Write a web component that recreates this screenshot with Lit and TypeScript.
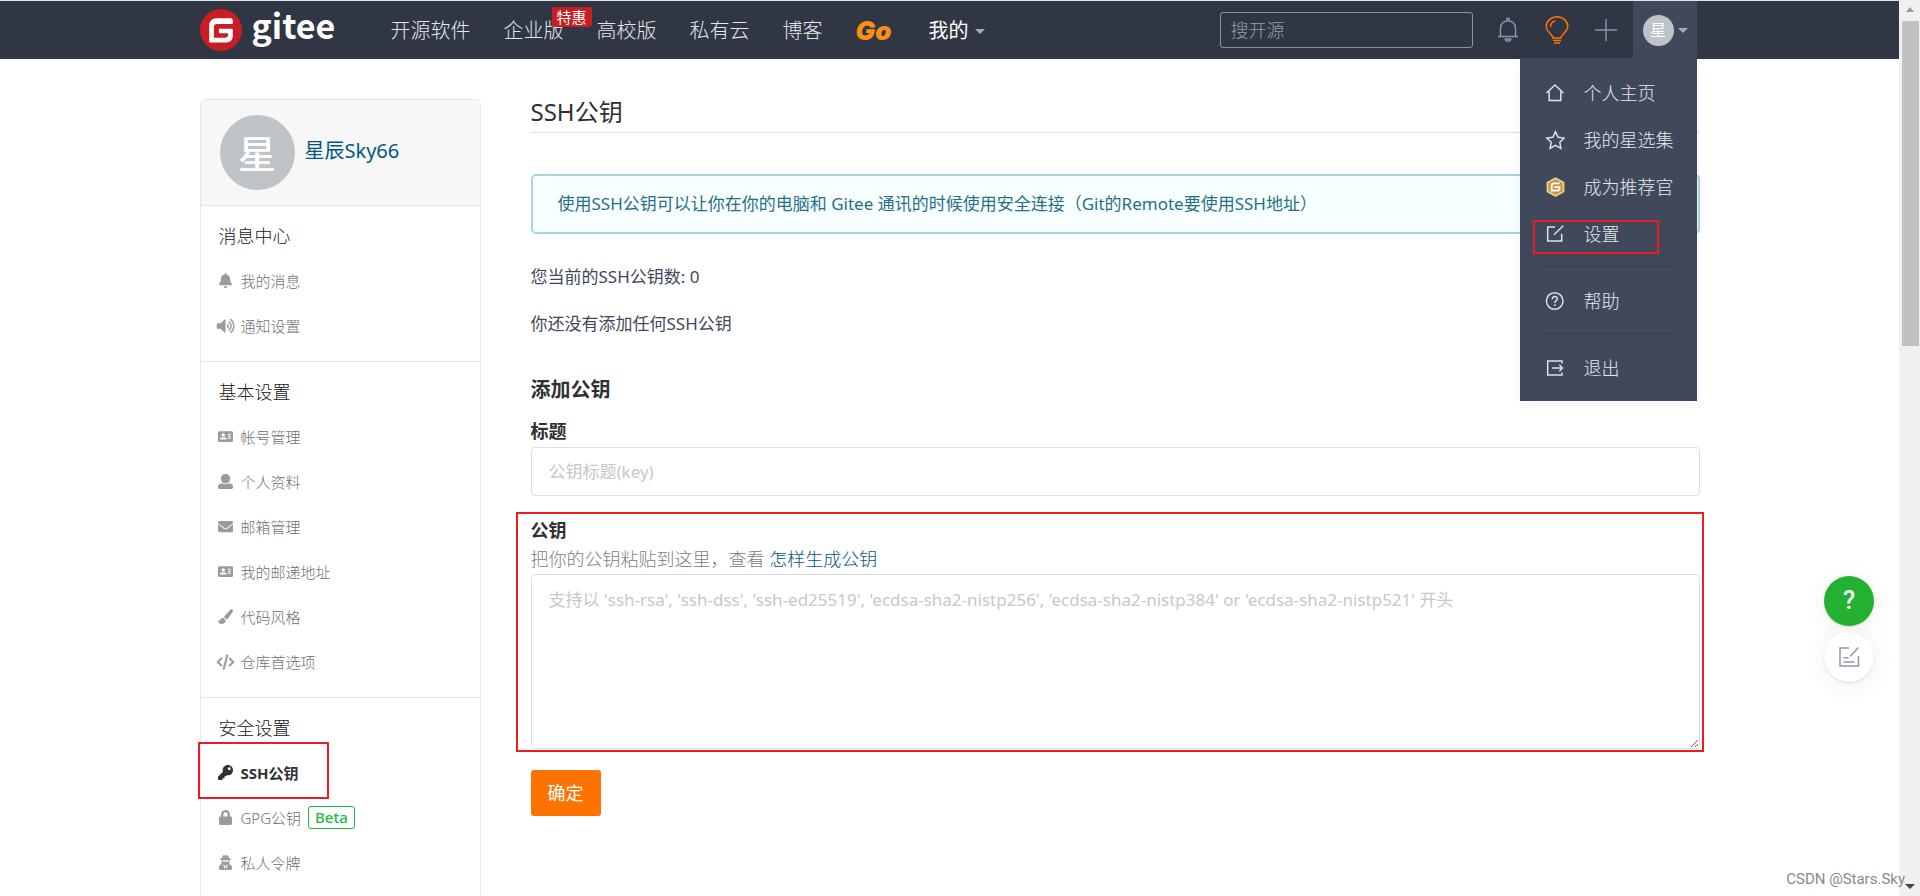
import { LitElement, html, css, svg, nothing } from "lit";
import { customElement, state } from "lit/decorators.js";

const icons: Record<string, any> = {
  bell: svg`<svg class="ico" viewBox="-32 0 512 512"><path d="M224 512c35.32 0 63.97-28.65 63.97-64H160.03c0 35.35 28.65 64 63.97 64zm215.39-149.71c-19.32-20.76-55.47-51.99-55.47-154.29 0-77.7-54.48-139.9-127.94-155.16V32c0-17.67-14.32-32-31.98-32s-31.98 14.33-31.98 32v20.84C118.56 68.1 64.08 130.3 64.08 208c0 102.3-36.15 133.53-55.47 154.29-6 6.45-8.66 14.16-8.61 21.71.11 16.4 12.98 32 32.1 32h383.8c19.12 0 32-15.6 32.1-32 .05-7.55-2.61-15.27-8.61-21.71z"/></svg>`,
  volume: svg`<svg class="ico wide" viewBox="0 0 18 16"><path d="M1 5.2h3L8 1.6c.4-.4 1-.1 1 .4v12c0 .6-.6.8-1 .4L4 10.800H1c-.5 0-.8-.3-.8-.8V6c0-.5.3-.8.8-.8z"/><path class="line" stroke-width="1.500" d="M10.700 6.100c1.300.8 1.300 3 0 3.800M12.200 3.600c3.200 2 3.200 6.800 0 8.800M13.700 1.200c4.700 3.200 4.700 10.400 0 13.600"/></svg>`,
  card: svg`<svg class="ico" viewBox="0 0 16 16"><path fill-rule="evenodd" d="M1.500 2.500h13c.8 0 1.500.6 1.500 1.400v8.600c0 .8-.7 1.400-1.500 1.400h-13c-.8 0-1.500-.6-1.500-1.400V3.900c0-.8.7-1.400 1.500-1.400zM5.600 4.500a1.900 1.900 0 1 0 0 3.800 1.900 1.900 0 0 0 0-3.800zM4.200 8.700C2.900 8.800 2.200 9.500 2.200 10.400v.8h6.800v-.8c0-.9-.7-1.600-2-1.700-.8.500-2 .5-2.800 0zM10.300 5v1.100h3.600V5zm0 2.100v1.100h3.600V7.100zm0 2.100v1.100h3.600V9.200z"/></svg>`,
  user: svg`<svg class="ico" viewBox="0 0 512 512"><path d="M256 0c88.366 0 160 71.634 160 160s-71.634 160-160 160S96 248.366 96 160 167.634 0 256 0zm183.283 333.821l-71.313-17.828c-74.923 53.89-165.738 41.864-223.94 0l-71.313 17.828C29.981 344.505 0 382.903 0 426.955V464c0 26.510 21.490 48 48 48h416c26.510 0 48-21.490 48-48v-37.045c0-44.052-29.981-82.450-72.717-93.134z"/></svg>`,
  mail: svg`<svg class="ico" viewBox="0 0 512 512"><path d="M502.300 190.800c3.900-3.100 9.700-.2 9.700 4.700V400c0 26.500-21.500 48-48 48H48c-26.500 0-48-21.500-48-48V195.600c0-5 5.700-7.800 9.700-4.700 22.400 17.400 52.100 39.500 154.100 113.600 21.100 15.400 56.700 47.800 92.200 47.600 35.700.3 72-32.800 92.300-47.600 102-74.100 131.600-96.300 154-113.700zM256 320c23.200.4 56.600-29.200 73.400-41.400 132.700-96.300 142.800-104.700 173.400-128.700 5.800-4.500 9.200-11.500 9.200-18.900v-19c0-26.500-21.500-48-48-48H48c-26.500 0-48 21.500-48 48v19c0 7.400 3.400 14.300 9.200 18.900 30.600 23.900 40.700 32.400 173.400 128.700 16.800 12.200 50.200 41.800 73.400 41.400z"/></svg>`,
  brush: svg`<svg class="ico" viewBox="0 0 16 16"><path d="M14.300.1c1 0 1.800.9 1.600 1.900-.1.500-.3.900-.6 1.400l-4.200 6.300c-.5.700-1.200 1.200-2 1.400L6.500 8.700c.1-.8.500-1.500 1.200-2.100l5.500-5.900c.3-.4.700-.6 1.100-.6zM5.400 9.400l2.700 2.400c.1 2.500-1.500 4.200-4.200 4.200-2.700 0-3.800-2.100-3.900-4.600.3.2 1.300 1 1.700.9.300 0 .5-.2.600-.4.500-1.600 1.500-2.400 3.100-2.500z"/></svg>`,
  code: svg`<svg class="ico wide" viewBox="0 0 18 16"><path class="line" stroke-width="2" stroke-linejoin="round" stroke-linecap="round" d="M4.800 4.500 1.200 8l3.600 3.500M13.200 4.500 16.800 8l-3.600 3.500M10.700 1.200 7.300 14.800"/></svg>`,
  key: svg`<svg class="ico" viewBox="0 0 512 512"><path d="M512 176.001C512 273.203 433.202 352 336 352c-11.220 0-22.190-1.062-32.827-3.069l-24.012 27.014A23.999 23.999 0 0 1 261.223 384H224v40c0 13.255-10.745 24-24 24h-40v40c0 13.255-10.745 24-24 24H24c-13.255 0-24-10.745-24-24v-78.059c0-6.365 2.529-12.470 7.029-16.971l161.802-161.802C163.108 213.814 160 195.271 160 176 160 78.798 238.797.001 335.999 0 433.488-.001 512 78.511 512 176.001zM336 128c0 26.510 21.490 48 48 48s48-21.490 48-48-21.490-48-48-48-48 21.490-48 48z"/></svg>`,
  lock: svg`<svg class="ico" viewBox="-32 0 512 512"><path d="M400 224h-24v-72C376 68.200 307.800 0 224 0S72 68.200 72 152v72H48c-26.500 0-48 21.500-48 48v192c0 26.500 21.500 48 48 48h352c26.500 0 48-21.500 48-48V272c0-26.500-21.500-48-48-48zm-104 0H152v-72c0-39.700 32.300-72 72-72s72 32.300 72 72v72z"/></svg>`,
  secret: svg`<svg class="ico" viewBox="0 0 16 16"><path fill-rule="evenodd" d="M5.800.2C6.500-.2 7.200.7 8 .7s1.500-.9 2.200-.5c.8.500 1.200 2 1.500 3.100 1.300.3 2.200.6 2.200 1.100s-.9.800-2 1v1c0 .4-.1.700-.2 1l.8.200-.9 2.100c1.900.5 3.400 1.700 3.400 3.800v1c0 .8-.7 1.500-1.500 1.500h-11C1.700 16 1 15.300 1 14.500v-1c0-2 1.200-3.300 3.100-3.800L3.400 7.500l.9-.1c-.1-.3-.2-.6-.2-1v-1c-1.100-.2-2-.5-2-1s.9-.8 2.200-1.100C4.600 2.200 5 .7 5.800.2zM5.100 5.700v.7c.3.900.8 1 1.700 1 .7 0 .8-.8 1.200-.8s.5.8 1.200.8c.9 0 1.400-.1 1.700-1v-.7c-1.800.2-4 .2-5.800 0zM5.500 10.200l1.700 5 .5-3.100-.8-1.400zm5 0-1.400.5-.8 1.400.5 3.100z"/></svg>`,
  home: svg`<svg class="mico" viewBox="0 0 20 20"><path d="M1.500 10 10 2l8.500 8M4.200 8.500v9h11.600v-9"/></svg>`,
  star: svg`<svg class="mico" viewBox="0 0 20 20"><path d="m10.500 1.800 2.700 5.500 6 .8-4.400 4.200 1.100 6-5.400-2.900-5.400 2.900 1.100-6L1.800 8.100l6-.8z"/></svg>`,
  badge: svg`<svg class="mico solid" viewBox="0 0 20 20"><path fill="#f0d08a" d="M10.500.2 19.400 5v10l-8.900 5-8.900-5V5z"/><path fill="#cc9448" d="m10.500 2.200 7.200 3.900v7.800l-7.200 4-7.200-4V6.100z"/><path fill="none" stroke="#fff" stroke-width="1.800" d="M14.800 6.300H9.200c-1.600 0-2.500.9-2.500 2.400v4.900h5.800c1.200 0 2-.8 2-2v-1.400H9.400"/></svg>`,
  edit: svg`<svg class="mico" viewBox="0 0 20 20"><path d="M10 3H2.700v14h14V9.800M9 10.800 18.300 1.800"/></svg>`,
  help: svg`<svg class="mico" viewBox="0 0 20 20"><circle cx="9.700" cy="10" r="8.300"/><path d="M7.300 8.200c0-3.400 5-3.400 5-.4 0 1.900-2.500 1.900-2.500 4.100M9.800 13.300v1.600"/></svg>`,
  exit: svg`<svg class="mico" viewBox="0 0 20 20"><path d="M17 5.500V3H2.700v14H17v-2.500M7 10h10.500M14.300 6.800l3.200 3.200-3.200 3.200"/></svg>`,
};

interface Item { label: string; icon: string; active?: boolean; tag?: string; }
interface Section { title: string; items: Item[]; }

@customElement("app-root")
export class AppRoot extends LitElement {
  @state() private sections: Section[] = [
    { title: "消息中心", items: [
      { label: "我的消息", icon: "bell" },
      { label: "通知设置", icon: "volume" },
    ] },
    { title: "基本设置", items: [
      { label: "帐号管理", icon: "card" },
      { label: "个人资料", icon: "user" },
      { label: "邮箱管理", icon: "mail" },
      { label: "我的邮递地址", icon: "card" },
      { label: "代码风格", icon: "brush" },
      { label: "仓库首选项", icon: "code" },
    ] },
    { title: "安全设置", items: [
      { label: "SSH公钥", icon: "key", active: true },
      { label: "GPG公钥", icon: "lock", tag: "Beta" },
      { label: "私人令牌", icon: "secret" },
    ] },
  ];

  static styles = css`
    :host {
      display: grid;
      grid-template-columns: minmax(0, 1fr) 21px;
      position: relative;
      height: 100vh;
      overflow: hidden;
      background: #fff;
      color: #40485b;
      font-family: "Noto Sans", "Noto Sans CJK SC", sans-serif;
      font-size: 17px;
      font-weight: 400;
      line-height: 24px;
    }
    *, *::before, *::after { box-sizing: border-box; }
    a { color: inherit; text-decoration: none; }
    h1, h2, h3, p, ul { margin: 0; padding: 0; list-style: none; }
    button, input, textarea { font: inherit; }
    svg { display: block; flex: none; }

    .page { min-width: 0; height: 100vh; overflow: hidden; }
    .wrap { width: 100%; max-width: 1500px; margin: 0 auto; }

    .top { background: #303643; border-top: 1px solid #dfe7ea; height: 59px; }
    .bar { display: flex; align-items: center; height: 58px; position: relative; }
    .brand { display: flex; align-items: center; gap: 10px; width: 191px; color: #fff; }
    .word { font: 700 34px/48px "Noto Sans CJK SC", sans-serif; padding-bottom: 10px; }
    .nav { display: flex; align-items: center; gap: 33px; padding-top: 2px; font-size: 20px; font-weight: 300; color: #e4e6e9; }
    .nav a { position: relative; line-height: 28px; white-space: nowrap; }
    .nav .mine { display: flex; align-items: center; gap: 6px; color: #fff; font-weight: 400; }
    .nav .go { width: 40px; font: italic 900 26px/28px Inter, sans-serif; color: #ff8f0c; }
    .promo { position: absolute; left: 48px; top: -10px; padding: 0 5px; border-radius: 2px; background: #c71d23; color: #fff; font-size: 15px; font-weight: 400; line-height: 20px; }
    .caret { border: 5px solid transparent; border-top-color: #a9adb7; border-bottom: 0; }
    .tools { display: flex; align-items: center; margin-left: auto; height: 100%; padding-right: 3px; }
    .search { width: 253px; height: 36px; padding: 0 10px; border: 1px solid #8c92a4; border-radius: 3px; background: transparent; color: #fff; font-size: 18px; font-weight: 300; margin-right: 11px; }
    .search::placeholder { color: #9a9da4; opacity: 1; }
    .tool { display: grid; place-items: center; width: 49px; height: 40px; padding: 0; border: 0; background: none; }
    .me { display: flex; align-items: center; gap: 4px; width: 64px; height: 100%; margin-left: 2px; padding: 0 0 0 10px; border: 0; background: #40485b; }
    .face { display: grid; place-items: center; border-radius: 50%; background: #bdc3c7; color: #fff; font-weight: 400; }
    .face.small { width: 31px; height: 31px; font-size: 16px; line-height: 20px; }
    .face.big { width: 75px; height: 75px; font-size: 38px; line-height: 44px; font-weight: 500; }

    .menu { position: absolute; z-index: 5; right: 3px; top: 57px; width: 177px; padding: 11px 0 10px; background: #40485b; color: #e6e8eb; font-size: 18px; font-weight: 300; box-shadow: 0 4px 12px rgba(0, 40, 60, .05); }
    .menu a { position: relative; display: flex; align-items: center; gap: 19px; height: 47px; padding-left: 25px; white-space: nowrap; }
    .menu hr { height: 1px; margin: 9px 22px 10px 23px; border: 0; background: #373e4f; }
    .mico { width: 20px; height: 20px; fill: none; stroke: #dfe1e5; stroke-width: 1.5; }
    .mico.solid { stroke: none; }
    .menu .marked::after { content: ""; position: absolute; left: 13px; top: 10px; width: 126px; height: 34px; border: 2px solid #ed1c24; }

    .body { display: grid; grid-template-columns: 281px minmax(0, 1fr); gap: 50px; padding-top: 40px; align-items: start; }

    .side { border: 1px solid #e3e9ed; border-radius: 5px 5px 0 0; min-height: 820px; }
    .who { display: flex; align-items: center; gap: 10px; height: 106px; padding-left: 19px; border-bottom: 1px solid #e3e9ed; border-radius: 4px 4px 0 0; background: #f7f7f8; color: #005980; font-size: 20px; }
    .who a { padding-bottom: 4px; }
    .sec { padding: 18px 0 13px; }
    .sec + .sec { border-top: 1px solid #e6e6e7; }
    .sec h3 { margin-bottom: 10px; padding-left: 18px; color: #202022; font-size: 18px; font-weight: 300; }
    .sec li { position: relative; display: flex; align-items: center; height: 45px; padding-left: 15px; color: #707070; font-size: 15px; font-weight: 300; }
    .sec li a { display: flex; align-items: center; gap: 6px; }
    .ico { width: 15px; height: 15px; margin: 0 2px; fill: #9b9b9b; }
    .ico.wide { width: 19px; height: 16px; margin: 0; }
    .ico .line { fill: none; stroke: #9b9b9b; }
    .sec .on { color: #303033; font-weight: 700; }
    .sec .on .ico { fill: #303033; }
    .sec .on::after { content: ""; position: absolute; left: -3px; top: -8px; width: 131px; height: 57px; border: 2px solid #ed1c24; }
    .tag { margin-left: 7px; padding: 0 6px; border: 1px solid #21ba45; border-radius: 3px; color: #21ba45; font-weight: 500; line-height: 21px; }

    .title { padding-bottom: 7px; border-bottom: 1px solid #dedfe0; color: #303033; font-size: 24px; font-weight: 400; line-height: 26px; }
    .note { margin-top: 41px; padding: 16px 25px; border: 2px solid #a9d5de; border-radius: 5px; background: #f8ffff; color: #276f86; }
    .count { margin-top: 31px; }
    .empty { margin-top: 23px; }
    .sub { margin-top: 40px; color: #303033; font-size: 20px; line-height: 28px; font-weight: 700; }
    .field { display: flex; flex-direction: column; position: relative; margin-top: 15px; }
    .field label { color: #303033; font-weight: 700; font-size: 18px; }
    .box { width: 100%; border: 1px solid #dddfe6; border-radius: 4px; background: #fff; color: #40485b; padding: 0 17px; }
    .box::placeholder { color: #c8c8ca; opacity: 1; }
    input.box { height: 49px; margin-top: 4px; }
    textarea.box { height: 175px; margin-top: 3px; padding: 13px 17px; resize: vertical; }
    .key { margin-top: 22px; }
    .key::after { content: ""; position: absolute; inset: -6px -4px -3px -15px; border: 2px solid #ed1c24; pointer-events: none; }
    .hint { margin-top: 5px; color: #808080; font-size: 18px; font-weight: 300; }
    .hint a { color: #005980; }
    .ok { display: block; min-width: 70px; height: 46px; margin-top: 21px; padding: 0 16px; border: 0; border-radius: 3px; background: #fe7300; color: #fff; font-size: 18px; font-weight: 400; }

    .float { position: absolute; right: 46px; top: 576px; display: grid; gap: 6px; }
    .float button { display: grid; place-items: center; width: 50px; height: 50px; padding: 0; border: 0; border-radius: 50%; background: #fff; color: #fff; font: 500 25px/30px Roboto, sans-serif; box-shadow: 0 1px 2px rgba(0, 0, 0, .1), 0 4px 24px rgba(0, 0, 0, .07); }
    .float .ask { background: #24b031; }

    .track { display: flex; flex-direction: column; align-items: center; background: #f0f0f0; padding: 7px 0 7px 1px; height: 100vh; }
    .up { border: 4px solid transparent; border-bottom: 5px solid #9a9a9a; border-top: 0; }
    .thumb { width: 17px; height: 325px; margin: 9px 0 auto; background: #c1c1c1; }
    .down { border: 5px solid transparent; border-top-color: #444; border-bottom: 0; }
    .mark { position: absolute; right: 15px; bottom: 7px; color: #8a8a8a; font: 400 15px/20px Roboto, sans-serif; }
  `;

  private menuItem(icon: string, label: string, marked = false) {
    return html`<a href="#" class=${marked ? "marked" : ""}>${icons[icon]}<span>${label}</span></a>`;
  }

  render() {
    return html`
      <div class="page">
        <header class="top">
          <div class="wrap bar">
            <a class="brand" href="#">
              <svg width="42" height="42" viewBox="0 0 42 42"><circle cx="21" cy="21" r="21" fill="#c71d23"/><path fill="#fff" d="M31.800 9.300H16.200A7 7 0 0 0 9.200 16.300v16.300c0 .6.500 1 1 1h16.400a6.200 6.200 0 0 0 6.200-6.200v-6.700c0-.6-.5-1-1-1H19.900c-.6 0-1 .4-1 1v2.600c0 .6.4 1 1 1h7.200c.6 0 1 .4 1 1v.5a3 3 0 0 1-3 3H14.900c-.6 0-1-.4-1-1v-9.800a3 3 0 0 1 3-3h14.900c.6 0 1-.4 1-1v-2.700c0-.6-.4-1-1-1z"/></svg>
              <span class="word">gitee</span>
            </a>
            <nav class="nav">
              <a href="#">开源软件</a>
              <a href="#">企业版<span class="promo">特惠</span></a>
              <a href="#">高校版</a>
              <a href="#">私有云</a>
              <a href="#">博客</a>
              <a href="#" class="go">Go</a>
              <a href="#" class="mine">我的<span class="caret"></span></a>
            </nav>
            <div class="tools">
              <input class="search" type="search" aria-label="搜开源" placeholder="搜开源">
              <button class="tool" aria-label="通知"><svg width="22" height="26" viewBox="0 0 22 26" fill="none" stroke="#8a94ab" stroke-width="1.400"><path d="M1 19.500h20M3.500 19.500V11c0-9.500 15-9.500 15 0v8.500M9.800 3.500V1.500h2.400v2M8.200 22c.3 3 5.300 3 5.600 0z"/></svg></button>
              <button class="tool" aria-label="动态"><svg width="24" height="28" viewBox="0 0 24 28" fill="none" stroke="#fe7300" stroke-width="1.500"><path d="M8 22c0-2-1.500-3.300-3.500-5.300A10.500 10.500 0 0 1 1.200 10.500a10.800 9.800 0 0 1 21.600 0c0 2.500-1.300 4.200-3.300 6.200S16 20 16 22zM8 24.500h8M9 27h6M5.500 11c0-3.500 1.800-5.500 4.700-6"/></svg></button>
              <button class="tool" aria-label="新建"><svg width="22" height="22" viewBox="0 0 22 22" fill="none" stroke="#8a94ab" stroke-width="1.400"><path d="M11 0v22M0 11h22"/></svg></button>
              <button class="me" aria-label="个人菜单"><span class="face small">星</span><span class="caret"></span></button>
            </div>
            <div class="menu">
              ${this.menuItem("home", "个人主页")}
              ${this.menuItem("star", "我的星选集")}
              ${this.menuItem("badge", "成为推荐官")}
              ${this.menuItem("edit", "设置", true)}
              <hr>
              ${this.menuItem("help", "帮助")}
              <hr>
              ${this.menuItem("exit", "退出")}
            </div>
          </div>
        </header>
        <div class="wrap body">
          <aside class="side">
            <div class="who"><span class="face big">星</span><a href="#">星辰Sky66</a></div>
            ${this.sections.map((s) => html`
              <section class="sec">
                <h3>${s.title}</h3>
                <ul>
                  ${s.items.map((i) => html`
                    <li class=${i.active ? "on" : ""}>
                      <a href="#">${icons[i.icon]}<span>${i.label}</span></a>
                      ${i.tag ? html`<span class="tag">${i.tag}</span>` : nothing}
                    </li>`)}
                </ul>
              </section>`)}
          </aside>
          <main>
            <h1 class="title">SSH公钥</h1>
            <p class="note">使用SSH公钥可以让你在你的电脑和 Gitee 通讯的时候使用安全连接（Git的Remote要使用SSH地址）</p>
            <p class="count">您当前的SSH公钥数: 0</p>
            <p class="empty">你还没有添加任何SSH公钥</p>
            <h2 class="sub">添加公钥</h2>
            <form @submit=${(e: Event) => e.preventDefault()}>
              <div class="field">
                <label for="t">标题</label>
                <input id="t" class="box" type="text" placeholder="公钥标题(key)">
              </div>
              <div class="field key">
                <label for="k">公钥</label>
                <p class="hint">把你的公钥粘贴到这里，查看 <a href="#">怎样生成公钥</a></p>
                <textarea id="k" class="box" placeholder="支持以 'ssh-rsa', 'ssh-dss', 'ssh-ed25519', 'ecdsa-sha2-nistp256', 'ecdsa-sha2-nistp384' or 'ecdsa-sha2-nistp521' 开头"></textarea>
              </div>
              <button class="ok" type="submit">确定</button>
            </form>
          </main>
        </div>
      </div>
      <div class="track"><span class="up"></span><span class="thumb"></span><span class="down"></span></div>
      <div class="float">
        <button class="ask" aria-label="帮助">?</button>
        <button aria-label="反馈"><svg width="22" height="22" viewBox="0 0 22 22" fill="none" stroke="#9196ad" stroke-width="1.500"><path d="M11 2H2v18h18.500V10M12 10.500 20.500 1.500M5.500 11.800h5M5.500 16h11"/></svg></button>
      </div>
      <span class="mark">CSDN @Stars.Sky</span>
    `;
  }
}
